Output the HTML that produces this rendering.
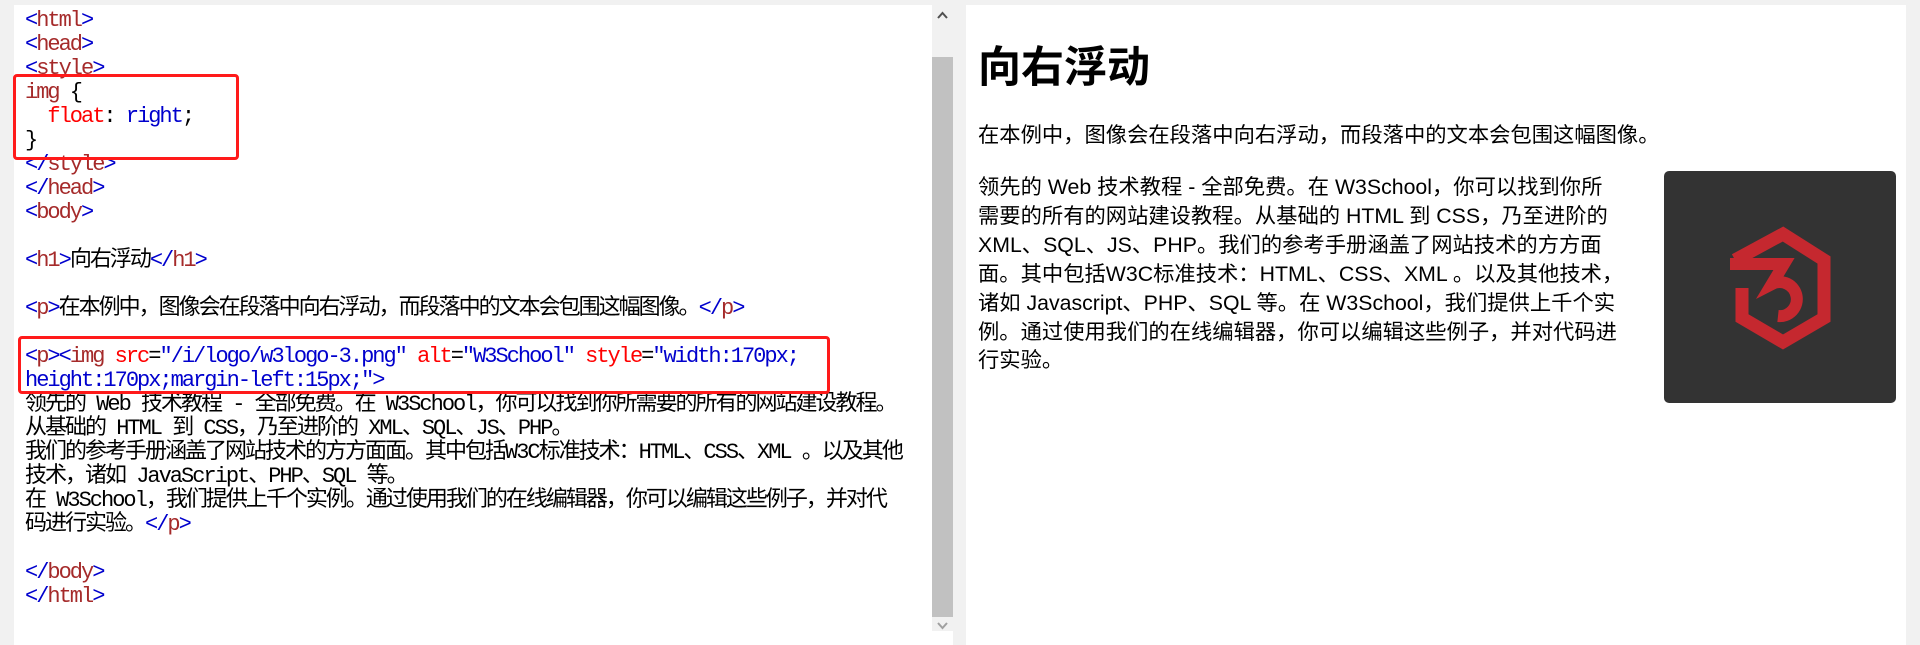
<!DOCTYPE html>
<html><head><meta charset="utf-8"><style>
html,body{margin:0;padding:0;background:#f1f1f1;width:1920px;height:631px;overflow:hidden;}
#left{position:absolute;left:14px;top:5px;width:939px;height:640px;background:#fff;}
#code{position:absolute;left:25px;top:9px;margin:0;font-family:"Liberation Mono","Noto Sans CJK SC",monospace;font-size:22px;letter-spacing:-2px;line-height:24px;white-space:pre;color:#000;}
.t{color:#a52a2a}.b{color:#0000cd}.r{color:#ff0000}
#sb{position:absolute;left:932px;top:5px;width:21px;height:626px;background:#f1f1f1;}
#thumb{position:absolute;left:932px;top:57px;width:21px;height:560px;background:#c1c1c1;}
.box{position:absolute;border:3px solid #ff1a1a;border-radius:4px;}
#right{position:absolute;left:966px;top:5px;width:940px;height:640px;background:#fff;}
#right .c{position:absolute;left:12px;font-family:"Liberation Sans","Noto Sans CJK SC",sans-serif;color:#000;white-space:nowrap;}
h1{margin:0;font-size:43px;font-weight:bold;line-height:50px;}
#img{position:absolute;left:698px;top:166px;width:232px;height:232px;background:#333;border-radius:5px;}
</style></head><body>
<div id="left"></div>
<pre id="code"><span class="b">&lt;</span><span class="t">html</span><span class="b">&gt;</span>
<span class="b">&lt;</span><span class="t">head</span><span class="b">&gt;</span>
<span class="b">&lt;</span><span class="t">style</span><span class="b">&gt;</span>
<span class="t">img</span> {
  <span class="r">float</span>: <span class="b">right</span>;
}
<span class="b">&lt;/</span><span class="t">style</span><span class="b">&gt;</span>
<span class="b">&lt;/</span><span class="t">head</span><span class="b">&gt;</span>
<span class="b">&lt;</span><span class="t">body</span><span class="b">&gt;</span>

<span class="b">&lt;</span><span class="t">h1</span><span class="b">&gt;</span>向右浮动<span class="b">&lt;/</span><span class="t">h1</span><span class="b">&gt;</span>

<span class="b">&lt;</span><span class="t">p</span><span class="b">&gt;</span>在本例中，图像会在段落中向右浮动，而段落中的文本会包围这幅图像。<span class="b">&lt;/</span><span class="t">p</span><span class="b">&gt;</span>

<span class="b">&lt;</span><span class="t">p</span><span class="b">&gt;&lt;</span><span class="t">img</span> <span class="r">src</span>=<span class="b">"/i/logo/w3logo-3.png"</span> <span class="r">alt</span>=<span class="b">"W3School"</span> <span class="r">style</span>=<span class="b">"width:170px;</span>
<span class="b">height:170px;margin-left:15px;"</span><span class="b">&gt;</span>
领先的 Web 技术教程 - 全部免费。在 W3School，你可以找到你所需要的所有的网站建设教程。
从基础的 HTML 到 CSS，乃至进阶的 XML、SQL、JS、PHP。
我们的参考手册涵盖了网站技术的方方面面。其中包括W3C标准技术：HTML、CSS、XML 。以及其他
技术，诸如 JavaScript、PHP、SQL 等。
在 W3School，我们提供上千个实例。通过使用我们的在线编辑器，你可以编辑这些例子，并对代
码进行实验。<span class="b">&lt;/</span><span class="t">p</span><span class="b">&gt;</span>

<span class="b">&lt;/</span><span class="t">body</span><span class="b">&gt;</span>
<span class="b">&lt;/</span><span class="t">html</span><span class="b">&gt;</span></pre>
<div class="box" style="left:13px;top:74px;width:220px;height:80px;"></div>
<div class="box" style="left:18px;top:336px;width:806px;height:52px;"></div>
<div id="sb"></div>
<div id="thumb"></div>
<svg style="position:absolute;left:932px;top:8px" width="21" height="14"><path d="M6 10 L10.5 5 L15 10" fill="none" stroke="#505050" stroke-width="2"/></svg>
<svg style="position:absolute;left:932px;top:619px" width="21" height="12"><path d="M6 4 L10.5 9 L15 4" fill="none" stroke="#a0a0a0" stroke-width="2"/></svg>
<div id="right">
<div class="c" style="top:38px"><h1>向右浮动</h1></div>
<div class="c" style="top:116px;font-size:21.3px;line-height:29px;">在本例中，图像会在段落中向右浮动，而段落中的文本会包围这幅图像。</div>
<div class="c" style="top:168px;font-size:21.3px;line-height:28.9px;">领先的 Web 技术教程 - 全部免费。在 W3School，你可以找到你所<br>需要的所有的网站建设教程。从基础的 HTML 到 CSS，乃至进阶的<br>XML、SQL、JS、PHP。我们的参考手册涵盖了网站技术的方方面<br>面。其中包括W3C标准技术：HTML、CSS、XML 。以及其他技术，<br>诸如 Javascript、PHP、SQL 等。在 W3School，我们提供上千个实<br>例。通过使用我们的在线编辑器，你可以编辑这些例子，并对代码进<br>行实验。</div>
<div id="img"></div>
</div>
<svg style="position:absolute;left:1700px;top:210px" width="160" height="160" viewBox="0 0 160 160">
<path d="M42 78 V108 L83 132 L124 108 V50 L83 24 L35 50" fill="none" stroke="#c5282f" stroke-width="13" stroke-linejoin="miter"/>
<path d="M30 54 L84 54 L72 74 A17 17 0 1 1 78 106" fill="none" stroke="#c5282f" stroke-width="12"/>
</svg>
</body></html>
